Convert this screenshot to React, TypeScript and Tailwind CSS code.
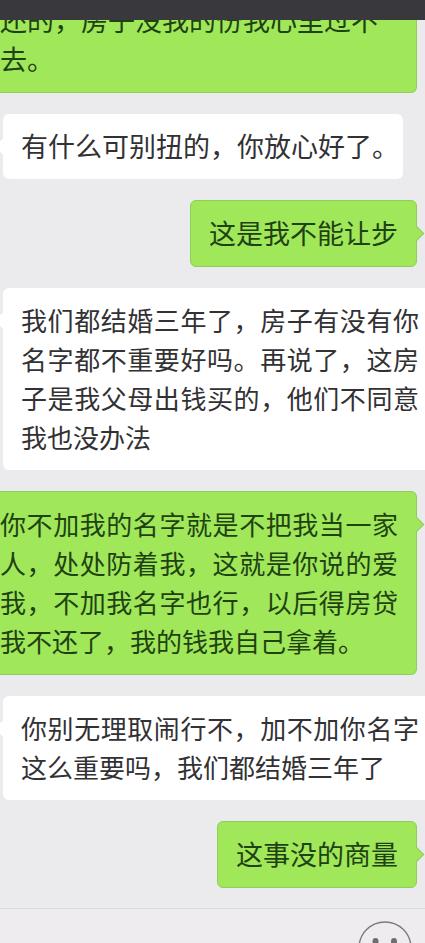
type Message = {
  id: number
  from: 'me' | 'them'
  text: string
  className: string
  noTail?: boolean
}

const messages: Message[] = [
  {
    id: 1,
    from: 'me',
    text: '还的，房子没我的份我心里过不去。',
    className: 'w-full pl-0 pr-[18px] text-[27px] rounded-r-md border-l-0',
    noTail: true,
  },
  { id: 2, from: 'them', text: '有什么可别扭的，你放心好了。', className: 'pl-[18px] pr-1 text-[27px] rounded-md' },
  { id: 3, from: 'me', text: '这是我不能让步', className: 'px-[18px] text-[27px] rounded-md' },
  {
    id: 4,
    from: 'them',
    text: '我们都结婚三年了，房子有没有你名字都不重要好吗。再说了，这房子是我父母出钱买的，他们不同意我也没办法',
    className: 'w-full pl-[18px] pr-1.5 text-[26px] text-justify rounded-l-md',
  },
  {
    id: 5,
    from: 'me',
    text: '你不加我的名字就是不把我当一家人，处处防着我，这就是你说的爱我，不加我名字也行，以后得房贷我不还了，我的钱我自己拿着。',
    className: 'w-full pl-0 pr-[18px] text-[26px] text-justify rounded-r-md border-l-0',
  },
  {
    id: 6,
    from: 'them',
    text: '你别无理取闹行不，加不加你名字这么重要吗，我们都结婚三年了',
    className: 'w-full pl-[18px] pr-1.5 text-[26px] text-justify rounded-l-md',
  },
  { id: 7, from: 'me', text: '这事没的商量', className: 'px-[18px] text-[27px] rounded-md' },
]

function Bubble({ message }: { message: Message }) {
  const mine = message.from === 'me'

  return (
    <li className={mine ? 'flex shrink-0 justify-end pr-2' : 'flex shrink-0 justify-start pl-[3px]'}>
      <div
        className={`relative pt-3 pb-3.5 leading-[39px] ${
          mine ? 'border border-[#8fce5c] bg-[#a0e75a] text-[#1f4212]' : 'bg-white text-[#323134]'
        } ${message.className}`}
      >
        {!message.noTail && (
          <span
            className={`absolute top-[27px] size-[11px] rotate-45 ${
              mine ? '-right-1.5 border-t border-r border-[#8fce5c] bg-[#a0e75a]' : '-left-1.5 bg-white'
            }`}
          />
        )}
        <p className="relative">{message.text}</p>
      </div>
    </li>
  )
}

function SmileIcon() {
  return (
    <svg className="size-[54px]" viewBox="0 0 54 54" fill="none">
      <circle cx="27" cy="27" r="26" stroke="#7d7b7c" strokeWidth="1.4" />
      <ellipse cx="17.5" cy="20.5" rx="3" ry="3.4" fill="#6f6d6e" />
      <ellipse cx="36" cy="20.5" rx="3" ry="3.4" fill="#6f6d6e" />
      <path d="M14 33c3 6 8 8 13 8s10-2 13-8" stroke="#7d7b7c" strokeWidth="1.4" strokeLinecap="round" />
    </svg>
  )
}

export default function App() {
  return (
    <div
      lang="zh-CN"
      className="flex h-screen flex-col overflow-hidden bg-[#ebeaec] font-['Noto_Sans_CJK_SC',sans-serif]"
    >
      <header className="h-5 shrink-0 bg-[#39383c]" />

      <main className="flex min-h-0 flex-1 flex-col justify-end overflow-hidden pb-5">
        <ul className="flex flex-col gap-[21px]">
          {messages.map((message) => (
            <Bubble key={message.id} message={message} />
          ))}
        </ul>
      </main>

      <footer className="flex h-[35px] shrink-0 items-start justify-end overflow-hidden border-t border-[#dcdbdc] bg-[#eeecee] pt-3 pr-[13px]">
        <button type="button" aria-label="表情" className="shrink-0">
          <SmileIcon />
        </button>
      </footer>
    </div>
  )
}
